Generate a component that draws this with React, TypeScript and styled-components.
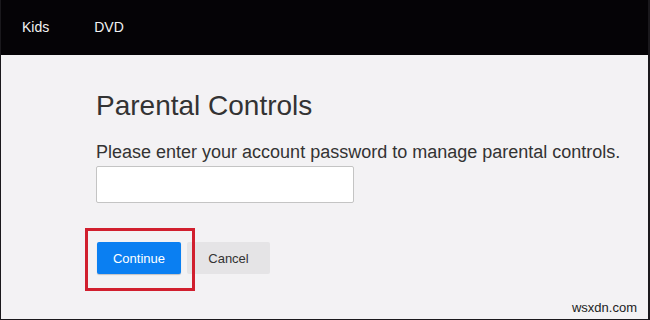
import React from "react";
import styled, { createGlobalStyle } from "styled-components";

const GlobalStyle = createGlobalStyle`
  html, body {
    margin: 0;
    padding: 0;
    background: #f3f2f4;
  }
  body {
    font-family: "Liberation Sans", Arial, sans-serif;
  }
`;

const Frame = styled.div`
  width: 650px;
  height: 320px;
  box-sizing: border-box;
  border-left: 1px solid #1a181c;
  border-right: 2px solid #1a181c;
  border-bottom: 1px solid #1a181c;
  background: #f3f2f4;
  display: flex;
  flex-direction: column;
  position: relative;
  overflow: hidden;
`;

const Header = styled.header`
  height: 55px;
  flex-shrink: 0;
  background: #050306;
  display: flex;
  align-items: center;
  gap: 45px;
  padding-left: 21px;
  padding-bottom: 2px;
  box-sizing: border-box;
`;

const NavLink = styled.a`
  color: #f2f2f2;
  font-size: 14px;
  text-decoration: none;
  cursor: pointer;
`;

const Main = styled.main`
  flex: 1;
  padding: 35px 0 0 95px;
  display: flex;
  flex-direction: column;
  align-items: flex-start;
`;

const Title = styled.h1`
  margin: 0;
  font-size: 28px;
  line-height: 32px;
  font-weight: normal;
  color: #333;
`;

const Prompt = styled.p`
  margin: 19px 0 0;
  font-size: 18px;
  line-height: 22px;
  color: #333;
`;

const PasswordInput = styled.input`
  margin-top: 3px;
  width: 258px;
  height: 37px;
  box-sizing: border-box;
  border: 1px solid #c4c4c4;
  border-radius: 2px;
  background: #fff;
  outline: none;
`;

const Actions = styled.div`
  margin-top: 39px;
  margin-left: 1px;
  display: flex;
  gap: 6px;
`;

const Button = styled.button<{ $primary?: boolean }>`
  width: ${(p) => (p.$primary ? 84 : 83)}px;
  height: 32px;
  border: none;
  border-radius: 2px;
  font-family: inherit;
  font-size: 13px;
  cursor: pointer;
  position: relative;
  background: ${(p) => (p.$primary ? "#0a7ff2" : "#e5e4e6")};
  color: ${(p) => (p.$primary ? "#fff" : "#333")};
  box-shadow: ${(p) => (p.$primary ? "0 1px 1px rgba(0,0,0,0.2)" : "none")};
`;

const Highlight = styled.span`
  position: absolute;
  left: -12px;
  top: -14px;
  width: 110px;
  height: 63px;
  border: 3px solid #d11f2e;
  box-sizing: border-box;
  z-index: 2;
  pointer-events: none;
`;

const Watermark = styled.span`
  position: absolute;
  right: 11px;
  bottom: 4px;
  font-size: 13px;
  color: #222;
`;

export default function App() {
  return (
    <>
      <GlobalStyle />
      <Frame>
        <Header>
          <NavLink>Kids</NavLink>
          <NavLink>DVD</NavLink>
        </Header>
        <Main>
          <Title>Parental Controls</Title>
          <Prompt>Please enter your account password to manage parental controls.</Prompt>
          <PasswordInput type="password" />
          <Actions>
            <Button $primary>
              Continue
              <Highlight />
            </Button>
            <Button>Cancel</Button>
          </Actions>
        </Main>
        <Watermark>wsxdn.com</Watermark>
      </Frame>
    </>
  );
}
